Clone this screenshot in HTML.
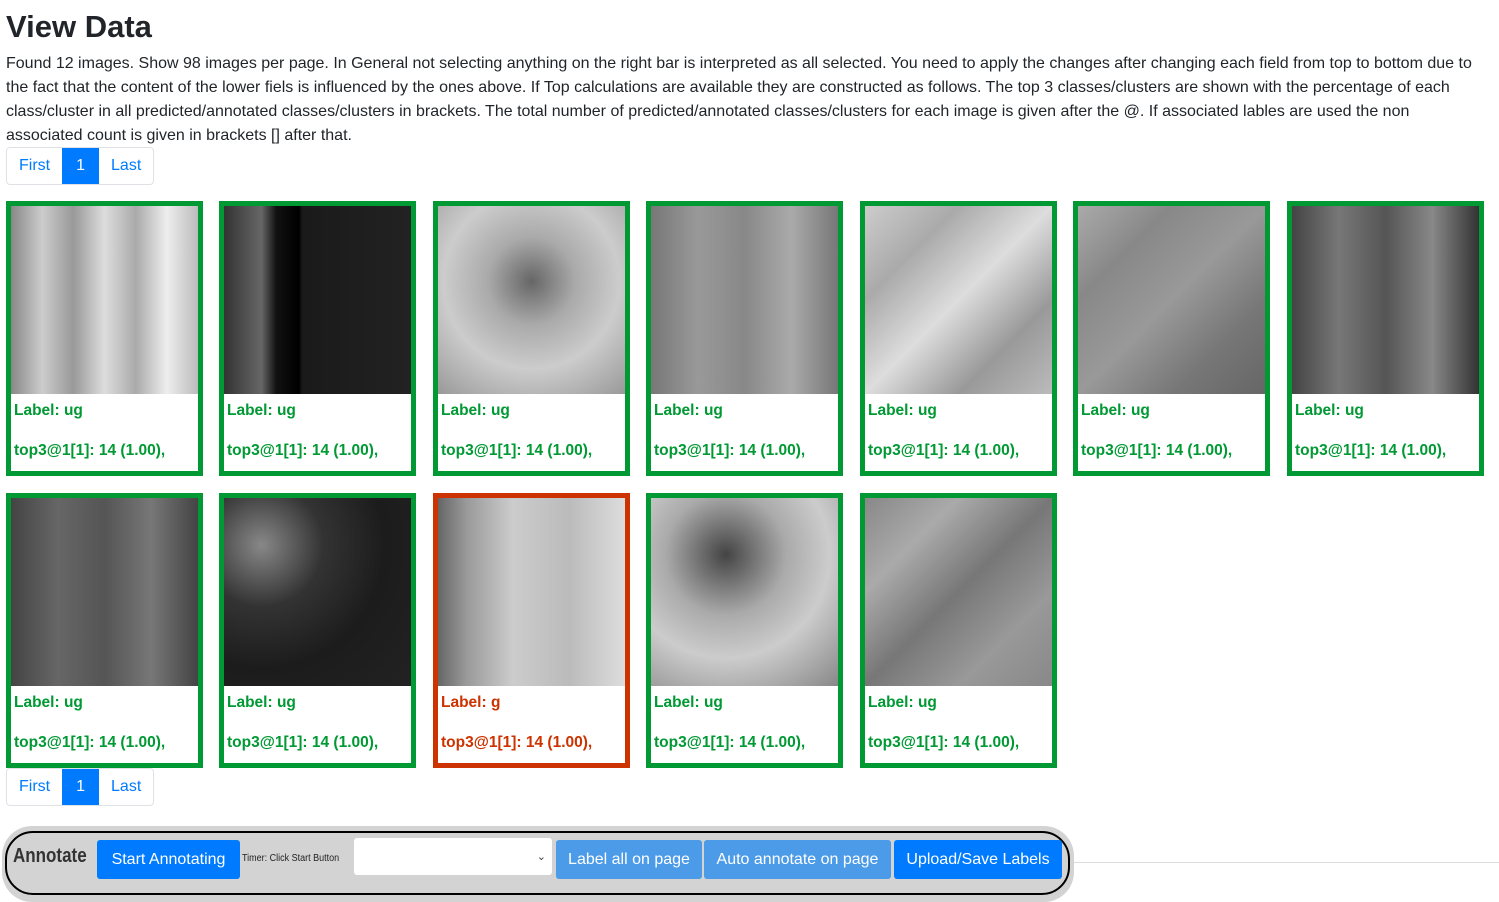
<!DOCTYPE html>
<html><head><style>
*{box-sizing:border-box}
body{margin:0;background:#fff;font-family:"Liberation Sans",sans-serif;color:#212529;width:1499px;height:896px;overflow:hidden;position:relative}
h1{position:absolute;left:6px;top:7px;margin:0;font-size:31px;font-weight:bold;line-height:40px}
p.d{position:absolute;left:6px;top:52px;margin:0;font-size:16px;line-height:24px;white-space:nowrap}
.pg{position:absolute;left:6px;height:38px;display:flex;border:1px solid #dee2e6;border-radius:4px;font-size:16px}
.pg span{padding:0 12px;line-height:36px;color:#007bff}
.pg span.a{background:#007bff;color:#fff;padding:0 14px}
.c{position:absolute;width:197px;height:275px;border:5px solid #009933;background:#fff;color:#009933;font-weight:bold;font-size:15.5px}
.c.r{border-color:#cc3300;color:#cc3300}
.c .im{width:187px;height:188px}
.c .l1{position:absolute;left:3px;top:196px}
.c .l2{position:absolute;left:3px;top:236px}
.bar{position:absolute;left:2px;top:826px;width:1072px;height:76px;background:#d3d3d3;border-radius:30px}
.bin{position:absolute;left:5px;top:831px;width:1065px;height:64px;border:2px solid #000;border-radius:28px}
.btn{position:absolute;top:840px;height:39px;background:#007bff;color:#fff;font-size:16px;line-height:39px;text-align:center;border-radius:3px}
.btn.l{background:#4c9be8}
</style></head><body>
<h1>View Data</h1>
<p class="d">Found 12 images. Show 98 images per page. In General not selecting anything on the right bar is interpreted as all selected. You need to apply the changes after changing each field from top to bottom due to<br>the fact that the content of the lower fiels is influenced by the ones above. If Top calculations are available they are constructed as follows. The top 3 classes/clusters are shown with the percentage of each<br>class/cluster in all predicted/annotated classes/clusters in brackets. The total number of predicted/annotated classes/clusters for each image is given after the @. If associated lables are used the non<br>associated count is given in brackets [] after that.</p>
<div class="pg" style="top:147px"><span>First</span><span class="a">1</span><span>Last</span></div>

<div class="c" style="left:6px;top:201px"><div class="im" style="background:linear-gradient(90deg,#888,#ccc,#999,#ddd,#aaa,#eee,#bbb)"></div><div class="l1">Label: ug</div><div class="l2">top3@1[1]: 14 (1.00),</div></div>
<div class="c" style="left:219px;top:201px"><div class="im" style="background:linear-gradient(90deg,#333,#666 20%,#111 28%,#000 40%,#1a1a1a 42%,#222)"></div><div class="l1">Label: ug</div><div class="l2">top3@1[1]: 14 (1.00),</div></div>
<div class="c" style="left:433px;top:201px"><div class="im" style="background:radial-gradient(circle at 50% 40%,#666,#aaa 30%,#ccc 60%,#999)"></div><div class="l1">Label: ug</div><div class="l2">top3@1[1]: 14 (1.00),</div></div>
<div class="c" style="left:646px;top:201px"><div class="im" style="background:linear-gradient(90deg,#777,#999,#888,#aaa,#777)"></div><div class="l1">Label: ug</div><div class="l2">top3@1[1]: 14 (1.00),</div></div>
<div class="c" style="left:860px;top:201px"><div class="im" style="background:linear-gradient(135deg,#ccc,#aaa,#ddd,#999,#bbb)"></div><div class="l1">Label: ug</div><div class="l2">top3@1[1]: 14 (1.00),</div></div>
<div class="c" style="left:1073px;top:201px"><div class="im" style="background:linear-gradient(135deg,#aaa,#888,#999,#777,#666)"></div><div class="l1">Label: ug</div><div class="l2">top3@1[1]: 14 (1.00),</div></div>
<div class="c" style="left:1287px;top:201px"><div class="im" style="background:linear-gradient(90deg,#444,#777,#555,#888,#333)"></div><div class="l1">Label: ug</div><div class="l2">top3@1[1]: 14 (1.00),</div></div>

<div class="c" style="left:6px;top:493px"><div class="im" style="background:linear-gradient(90deg,#444,#666,#555,#777,#444)"></div><div class="l1">Label: ug</div><div class="l2">top3@1[1]: 14 (1.00),</div></div>
<div class="c" style="left:219px;top:493px"><div class="im" style="background:radial-gradient(circle at 20% 25%,#888,#333 30%,#1c1c1c 60%,#222)"></div><div class="l1">Label: ug</div><div class="l2">top3@1[1]: 14 (1.00),</div></div>
<div class="c r" style="left:433px;top:493px"><div class="im" style="background:linear-gradient(90deg,#666,#999 15%,#ccc 40%,#bbb 70%,#ddd)"></div><div class="l1">Label: g</div><div class="l2">top3@1[1]: 14 (1.00),</div></div>
<div class="c" style="left:646px;top:493px"><div class="im" style="background:radial-gradient(circle at 40% 30%,#444,#aaa 35%,#ccc 60%,#888)"></div><div class="l1">Label: ug</div><div class="l2">top3@1[1]: 14 (1.00),</div></div>
<div class="c" style="left:860px;top:493px"><div class="im" style="background:linear-gradient(135deg,#888,#aaa,#777,#999,#888)"></div><div class="l1">Label: ug</div><div class="l2">top3@1[1]: 14 (1.00),</div></div>

<div class="pg" style="top:768px"><span>First</span><span class="a">1</span><span>Last</span></div>

<div style="position:absolute;left:1074px;top:862px;width:425px;height:1px;background:#ddd"></div>
<div class="bar"></div><div class="bin"></div>
<div style="position:absolute;left:13px;top:845px;font-size:20px;font-weight:bold;color:#333;transform:scaleX(0.85);transform-origin:left">Annotate</div>
<div class="btn" style="left:97px;width:143px">Start Annotating</div>
<div style="position:absolute;left:242px;top:853px;font-size:10px;color:#222;transform:scaleX(0.9);transform-origin:left">Timer: Click Start Button</div>
<div style="position:absolute;left:354px;top:838px;width:198px;height:37px;background:#fff;border-radius:3px;font-size:11px;text-align:right;padding:12px 6px 0 0;color:#444">&#8964;</div>
<div class="btn l" style="left:556px;width:146px">Label all on page</div>
<div class="btn l" style="left:704px;width:187px">Auto annotate on page</div>
<div class="btn" style="left:894px;width:168px">Upload/Save Labels</div>
</body></html>
